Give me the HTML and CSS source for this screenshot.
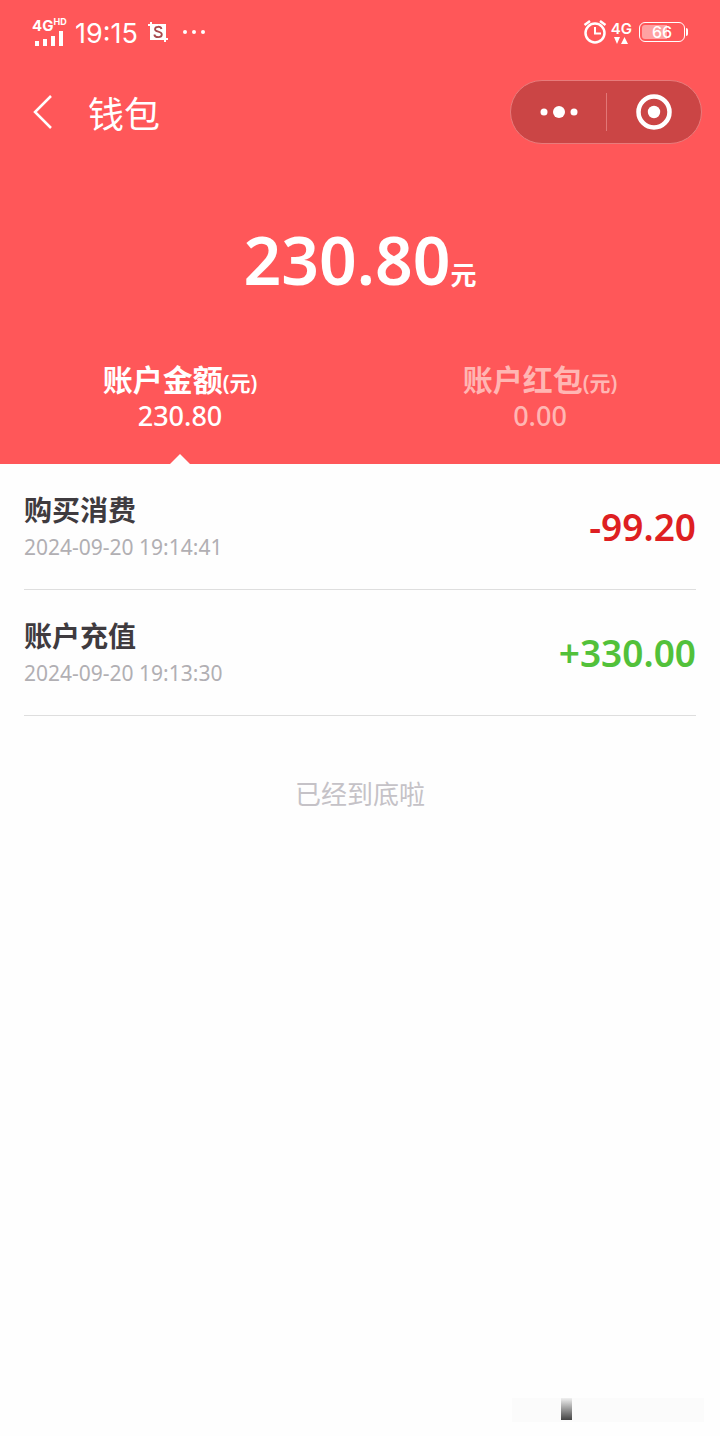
FILE: index.html
```
<!DOCTYPE html>
<html lang="zh-CN">
<head>
    <meta charset="UTF-8">
    <meta name="viewport" content="width=device-width, initial-scale=1.0">
    <title>钱包</title>
    <link rel="stylesheet" href="styles.css">
</head>
<body>

<div class="wallet">
    <header class="wallet-header">
        <!-- Status bar -->
        <div class="status-bar">
            <div class="status-left">
                <div class="network">
                    <span class="network-name">4G<sup>HD</sup></span>
                    <svg class="signal" width="30" height="16" viewBox="0 0 30 16" fill="#fff">
                        <rect x="0" y="11" width="4" height="5"/>
                        <rect x="8" y="9" width="4" height="7"/>
                        <rect x="16" y="6" width="4" height="10"/>
                        <rect x="24" y="1" width="4" height="15"/>
                    </svg>
                </div>
                <span class="clock">19:15</span>
                <svg class="capture" width="20" height="20" viewBox="0 0 20 20">
                    <rect x="2" y="2" width="16" height="16" fill="#fff"/>
                    <path d="M0 3h3M3 0v3M17 17h3M17 17v3" stroke="#fff" stroke-width="2"/>
                    <path d="M13.5 7C13 4 7 4 7 7.200C7 10.500 13.800 8.800 13.800 12.500C13.800 16 6.800 16 6.300 12.500" fill="none" stroke="#a84a4e" stroke-width="1.800"/>
                </svg>
                <svg class="more" width="24" height="6" viewBox="0 0 24 6" fill="#fff">
                    <circle cx="3" cy="3" r="2"/>
                    <circle cx="12" cy="3" r="2"/>
                    <circle cx="21" cy="3" r="2"/>
                </svg>
            </div>
            <div class="status-right">
                <svg width="24" height="26" viewBox="0 0 24 26" fill="none" stroke="#fff">
                    <circle cx="12" cy="14" r="9.500" stroke-width="2.500"/>
                    <path d="M12 8v6.500h6" stroke-width="2"/>
                    <path d="M1.500 6L7 2M17 2l5.500 4" stroke-width="2.500"/>
                </svg>
                <div class="data">
                    <span class="data-name">4G</span>
                    <svg width="14" height="7" viewBox="0 0 14 7" fill="#fff">
                        <path d="M0 0h6L3 7zM7 7h7L10.500 0z"/>
                    </svg>
                </div>
                <div class="battery"><span class="battery-level">66</span></div>
            </div>
        </div>

        <!-- Title bar -->
        <nav class="nav-bar">
            <button class="back" aria-label="返回">
                <svg width="20" height="34" viewBox="0 0 20 34" fill="none" stroke="#fff" stroke-width="2.500">
                    <path d="M18 1L2 17l16 16"/>
                </svg>
            </button>
            <h1 class="title">钱包</h1>
            <div class="capsule">
                <button class="capsule-btn" aria-label="更多">
                    <svg width="38" height="14" viewBox="0 0 38 14" fill="#fff">
                        <circle cx="4" cy="7" r="3.500"/>
                        <circle cx="19" cy="7" r="6"/>
                        <circle cx="34" cy="7" r="3.500"/>
                    </svg>
                </button>
                <button class="capsule-btn" aria-label="关闭">
                    <svg width="36" height="36" viewBox="0 0 36 36">
                        <circle cx="18" cy="18" r="15.500" fill="none" stroke="#fff" stroke-width="4.500"/>
                        <circle cx="18" cy="18" r="6.200" fill="#fff"/>
                    </svg>
                </button>
            </div>
        </nav>

        <p class="balance">230.80<span class="balance-unit">元</span></p>

        <div class="tabs">
            <button class="tab active">
                <span class="tab-name">账户金额<small>(元)</small></span>
                <span class="tab-value">230.80</span>
            </button>
            <button class="tab">
                <span class="tab-name">账户红包<small>(元)</small></span>
                <span class="tab-value">0.00</span>
            </button>
        </div>
    </header>

    <!-- Transactions -->
    <main class="records">
        <ul class="record-list">
            <li class="record">
                <div>
                    <h2 class="record-name">购买消费</h2>
                    <time class="record-time">2024-09-20 19:14:41</time>
                </div>
                <span class="amount expense">-99.20</span>
            </li>
            <li class="record">
                <div>
                    <h2 class="record-name">账户充值</h2>
                    <time class="record-time">2024-09-20 19:13:30</time>
                </div>
                <span class="amount income">+330.00</span>
            </li>
        </ul>
        <p class="list-end">已经到底啦</p>
    </main>

    <footer class="footer">
        <div class="stamp"><div class="stamp-mark"></div></div>
    </footer>
</div>

</body>
</html>
```
FILE: styles.css
```
* {
    box-sizing: border-box;
}

body {
    margin: 0;
    background: #fefefe;
    color: #3f3b3f;
    font-family: "Noto Sans", "Noto Sans CJK SC", sans-serif;
}

h1, h2, p, ul {
    margin: 0;
    padding: 0;
}

button {
    padding: 0;
    border: none;
    background: none;
    color: inherit;
    font: inherit;
    cursor: pointer;
}

svg {
    display: block;
}

.wallet {
    display: flex;
    flex-direction: column;
    min-height: 100vh;
}

.wallet-header {
    background: #ff5759;
    color: #fff;
}

/* Status bar */
.status-bar {
    display: flex;
    justify-content: space-between;
    height: 64px;
    padding: 0 32px;
    font-family: Inter, sans-serif;
}

.status-left,
.status-right {
    display: flex;
    align-items: center;
}

.network {
    width: 36px;
    margin-right: 7px;
}

.network-name {
    display: block;
    font-size: 15px;
    font-weight: 700;
    line-height: 14px;
    white-space: nowrap;
}

.network-name sup {
    font-size: 9px;
    line-height: 0;
}

.signal {
    margin: -3px 0 0 3px;
}

.clock {
    width: 65px;
    margin-right: 8px;
    padding-top: 3px;
    font-size: 27px;
    line-height: 32px;
}

.more {
    margin-left: 14px;
}

.data {
    display: flex;
    flex-direction: column;
    align-items: center;
    margin: 0 7px 0 4px;
}

.data-name {
    font-size: 15px;
    font-weight: 600;
    line-height: 17px;
}

.battery {
    position: relative;
    width: 46px;
    height: 20px;
    margin-right: 3px;
    border: 1px solid #fff;
    border-radius: 6px;
    background: linear-gradient(90deg, #ffa2a2 62%, transparent 62%) content-box;
    padding: 2px;
    text-align: center;
}

.battery::after {
    content: "";
    position: absolute;
    top: 5px;
    right: -4px;
    width: 2px;
    height: 8px;
    border-radius: 0 2px 2px 0;
    background: #fff;
}

.battery-level {
    display: block;
    font-size: 16px;
    font-weight: 500;
    line-height: 14px;
}

/* Title bar */
.nav-bar {
    display: flex;
    align-items: center;
    height: 96px;
    padding: 0 18px 0 33px;
}

.back {
    margin-right: 35px;
}

.title {
    font-family: "Noto Sans CJK SC", sans-serif;
    font-size: 36px;
    font-weight: 400;
    line-height: 48px;
}

.capsule {
    display: flex;
    width: 192px;
    height: 64px;
    margin-left: auto;
    border: 1px solid #e87b7b;
    border-radius: 32px;
    background: #cb4545;
}

.capsule-btn {
    display: flex;
    flex: 1;
    align-items: center;
    justify-content: center;
}

.capsule-btn + .capsule-btn {
    position: relative;
}

.capsule-btn + .capsule-btn::before {
    content: "";
    position: absolute;
    top: 12px;
    left: 0;
    width: 1px;
    height: 38px;
    background: #e27777;
}

.balance {
    padding: 51px 0 35px;
    font-size: 66px;
    font-weight: 600;
    line-height: 96px;
    text-align: center;
}

.balance-unit {
    font-size: 26px;
    line-height: 1;
}

/* Tabs */
.tabs {
    display: grid;
    grid-template-columns: 1fr 1fr;
}

.tab {
    position: relative;
    height: 122px;
    padding: 20px 0 42px;
    color: #ffb6b3;
}

.tab.active {
    color: #fff;
}

.tab.active::after {
    content: "";
    position: absolute;
    bottom: 0;
    left: 50%;
    margin-left: -10px;
    border: 10px solid transparent;
    border-top: none;
    border-bottom-color: #fefefe;
}

.tab-name,
.tab-value {
    display: block;
    line-height: 36px;
}

.tab-name {
    font-size: 30px;
    font-weight: 700;
}

.tab-name small {
    font-size: 21px;
    font-weight: 600;
    line-height: 1;
}

.tab-value {
    font-size: 27px;
    font-weight: 500;
}

/* Transactions */
.records {
    flex: 1;
    padding: 0 24px;
}

.record-list {
    list-style: none;
}

.record {
    display: flex;
    align-items: center;
    justify-content: space-between;
    height: 126px;
    border-bottom: 1px solid #dedede;
}

.record-name {
    font-size: 28px;
    font-weight: 700;
    line-height: 40px;
}

.record-time {
    display: block;
    color: #b1afb3;
    font-size: 21px;
    line-height: 34px;
}

.amount {
    font-size: 37px;
    font-weight: 600;
}

.expense {
    color: #de1f22;
}

.income {
    color: #52c13a;
}

.list-end {
    padding-top: 58px;
    color: #c5c2c7;
    font-size: 26px;
    line-height: 40px;
    text-align: center;
}

/* Faded stamp in the corner */
.footer {
    display: flex;
    justify-content: flex-end;
    padding: 0 16px 14px;
}

.stamp {
    width: 192px;
    height: 24px;
    padding-left: 49px;
    background: #fbfbfb;
}

.stamp-mark {
    width: 11px;
    height: 22px;
    background: linear-gradient(#f0f0f0, #999 50%, #444);
}
```
